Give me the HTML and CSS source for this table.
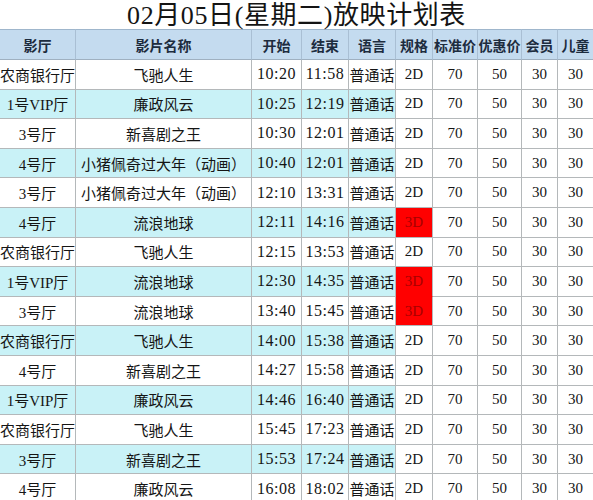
FILE: index.html
```html
<!DOCTYPE html>
<html lang="zh-CN">
<head>
<meta charset="utf-8">
<title>放映计划表</title>
<link rel="stylesheet" href="styles.css">
</head>
<body>
<div class="sheet">
  <h1 class="title">02月05日(星期二)放映计划表</h1>
  <table class="plan">
    <colgroup>
      <col class="c-hall"><col class="c-film"><col class="c-start"><col class="c-end"><col class="c-lang">
      <col class="c-fmt"><col class="c-std"><col class="c-disc"><col class="c-mem"><col class="c-kid">
    </colgroup>
    <thead>
      <tr><th>影厅</th><th>影片名称</th><th>开始</th><th>结束</th><th>语言</th><th>规格</th><th>标准价</th><th>优惠价</th><th>会员</th><th>儿童</th></tr>
    </thead>
    <tbody>
      <tr><td>农商银行厅</td><td>飞驰人生</td><td class="t">10:20</td><td class="t">11:58</td><td>普通话</td><td>2D</td><td>70</td><td>50</td><td>30</td><td>30</td></tr>
      <tr class="cy"><td>1号VIP厅</td><td>廉政风云</td><td class="t">10:25</td><td class="t">12:19</td><td>普通话</td><td>2D</td><td>70</td><td>50</td><td>30</td><td>30</td></tr>
      <tr><td>3号厅</td><td>新喜剧之王</td><td class="t">10:30</td><td class="t">12:01</td><td>普通话</td><td>2D</td><td>70</td><td>50</td><td>30</td><td>30</td></tr>
      <tr class="cy"><td>4号厅</td><td>小猪佩奇过大年（动画）</td><td class="t">10:40</td><td class="t">12:01</td><td>普通话</td><td>2D</td><td>70</td><td>50</td><td>30</td><td>30</td></tr>
      <tr><td>3号厅</td><td>小猪佩奇过大年（动画）</td><td class="t">12:10</td><td class="t">13:31</td><td>普通话</td><td>2D</td><td>70</td><td>50</td><td>30</td><td>30</td></tr>
      <tr class="cy"><td>4号厅</td><td>流浪地球</td><td class="t">12:11</td><td class="t">14:16</td><td>普通话</td><td class="d3">3D</td><td>70</td><td>50</td><td>30</td><td>30</td></tr>
      <tr><td>农商银行厅</td><td>飞驰人生</td><td class="t">12:15</td><td class="t">13:53</td><td>普通话</td><td>2D</td><td>70</td><td>50</td><td>30</td><td>30</td></tr>
      <tr class="cy"><td>1号VIP厅</td><td>流浪地球</td><td class="t">12:30</td><td class="t">14:35</td><td>普通话</td><td class="d3 join">3D</td><td>70</td><td>50</td><td>30</td><td>30</td></tr>
      <tr><td>3号厅</td><td>流浪地球</td><td class="t">13:40</td><td class="t">15:45</td><td>普通话</td><td class="d3">3D</td><td>70</td><td>50</td><td>30</td><td>30</td></tr>
      <tr class="cy"><td>农商银行厅</td><td>飞驰人生</td><td class="t">14:00</td><td class="t">15:38</td><td>普通话</td><td>2D</td><td>70</td><td>50</td><td>30</td><td>30</td></tr>
      <tr><td>4号厅</td><td>新喜剧之王</td><td class="t">14:27</td><td class="t">15:58</td><td>普通话</td><td>2D</td><td>70</td><td>50</td><td>30</td><td>30</td></tr>
      <tr class="cy"><td>1号VIP厅</td><td>廉政风云</td><td class="t">14:46</td><td class="t">16:40</td><td>普通话</td><td>2D</td><td>70</td><td>50</td><td>30</td><td>30</td></tr>
      <tr><td>农商银行厅</td><td>飞驰人生</td><td class="t">15:45</td><td class="t">17:23</td><td>普通话</td><td>2D</td><td>70</td><td>50</td><td>30</td><td>30</td></tr>
      <tr class="cy"><td>3号厅</td><td>新喜剧之王</td><td class="t">15:53</td><td class="t">17:24</td><td>普通话</td><td>2D</td><td>70</td><td>50</td><td>30</td><td>30</td></tr>
      <tr><td>4号厅</td><td>廉政风云</td><td class="t">16:08</td><td class="t">18:02</td><td>普通话</td><td>2D</td><td>70</td><td>50</td><td>30</td><td>30</td></tr>
    </tbody>
  </table>
</div>
</body>
</html>
```

FILE: styles.css
```css
html, body {
  margin: 0;
  padding: 0;
  background: #ffffff;
}

.sheet {
  width: 593px;
  overflow: hidden;
}

.title {
  margin: 0;
  height: 29px;
  font-family: "Liberation Serif", "Noto Sans CJK SC", serif;
  font-weight: 400;
  font-size: 26px;
  line-height: 32px;
  letter-spacing: 0.6px;
  text-align: center;
  color: #141414;
  white-space: nowrap;
}

.plan {
  width: 593px;
  table-layout: fixed;
  border-collapse: separate;
  border-spacing: 0;
}

.c-hall { width: 76px; }
.c-film { width: 176px; }
.c-start { width: 50px; }
.c-end { width: 47px; }
.c-lang { width: 47px; }
.c-fmt { width: 37px; }
.c-std { width: 45px; }
.c-disc { width: 44px; }
.c-mem { width: 36px; }
.c-kid { width: 35px; }

.plan th,
.plan td {
  box-sizing: border-box;
  padding: 0;
  text-align: center;
  white-space: nowrap;
  overflow: hidden;
  border-right: 1px solid #b4b8ba;
  border-bottom: 1px solid #b4b8ba;
}

.plan th:last-child,
.plan td:last-child {
  border-right: none;
}

.plan th {
  height: 31px;
  background: #c4dbef;
  border-top: 1px solid #9fb6cc;
  border-right-color: #a9bfd4;
  border-bottom-color: #9fb0c0;
  font-family: "Noto Sans CJK SC", sans-serif;
  font-weight: 700;
  font-size: 14px;
  color: #1d2c3e;
}

.plan td {
  height: 29.6px;
  font-family: "Liberation Serif", "Noto Sans CJK SC", serif;
  font-size: 15px;
  color: #151515;
}

.plan td.t {
  font-size: 16px;
  letter-spacing: 0.5px;
}

.plan tr.cy td:nth-child(-n+5) {
  background: #c9f2f7;
}

.plan td.d3 {
  background: #ff0000;
  color: #a80000;
}

.plan td.join {
  border-bottom-color: #ff0000;
}
```
